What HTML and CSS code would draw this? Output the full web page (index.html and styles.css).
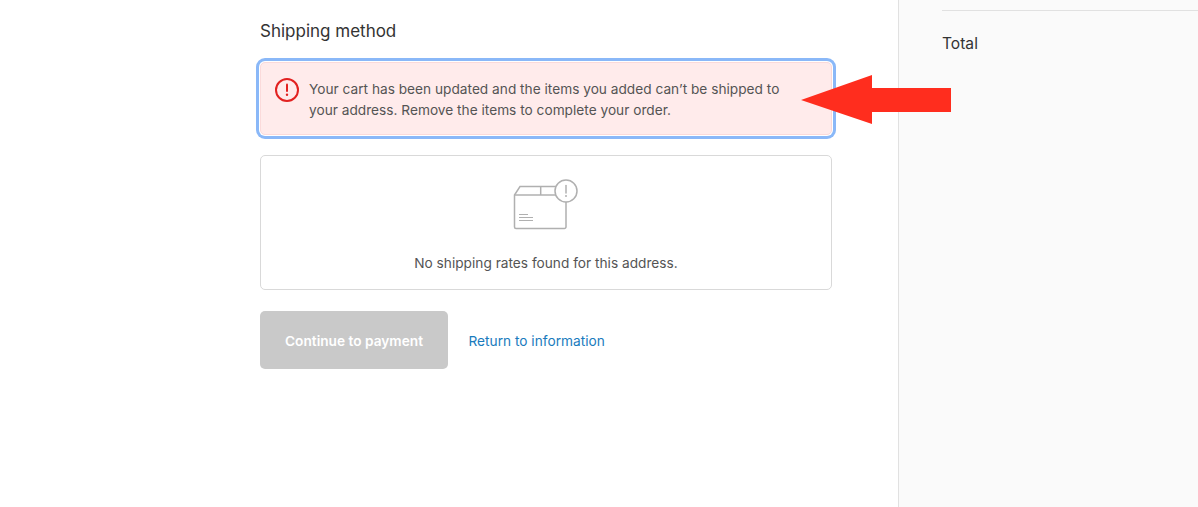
FILE: index.html
```html
<!DOCTYPE html>
<html lang="en">
<head>
<meta charset="utf-8">
<title>Shipping method</title>
<link rel="stylesheet" href="styles.css">
</head>
<body>
<div class="page">
  <main class="main">
    <h2 class="heading">Shipping method</h2>
    <div class="alert">
      <svg class="alert-icon" width="24" height="24" viewBox="0 0 24 24" fill="none">
        <circle cx="12" cy="12" r="11" stroke="#e22120" stroke-width="2"/>
        <path d="M12 6.500v6.500" stroke="#e22120" stroke-width="2" stroke-linecap="round"/>
        <circle cx="12" cy="16.800" r="1.200" fill="#e22120"/>
      </svg>
      <p class="alert-text">Your cart has been updated and the items you added can’t be shipped to your address. Remove the items to complete your order.</p>
    </div>
    <div class="rates">
      <svg class="rates-icon" width="66" height="52" viewBox="0 0 66 52" fill="none" stroke="#b0b0b0" stroke-width="1.500">
        <path d="M1.500 49V17L7 8.500H43"/>
        <path d="M1.500 17H53"/>
        <path d="M53 24V49a1.500 1.500 0 0 1-1.500 1.500H3A1.500 1.500 0 0 1 1.500 49"/>
        <path d="M27.700 8.500V17"/>
        <path d="M6 36.500H15M6 39.500H20M6 42.500H20" stroke-width="1"/>
        <circle cx="53" cy="13" r="11" fill="#fff"/>
        <path d="M53 7.500V15" stroke-linecap="round"/>
        <circle cx="53" cy="18" r="1" fill="#b0b0b0" stroke="none"/>
      </svg>
      <p class="rates-text">No shipping rates found for this address.</p>
    </div>
    <div class="actions">
      <button class="continue" type="button" disabled>Continue to payment</button>
      <a class="return" href="#">Return to information</a>
    </div>
  </main>
  <aside class="sidebar">
    <div class="summary-line">
      <span class="total">Total</span>
    </div>
  </aside>
  <svg class="arrow" width="150" height="49" viewBox="0 0 150 49">
    <polygon points="0,25 71,0 71,13 150,13 150,37 71,37 71,49" fill="#ff2d1e"/>
  </svg>
</div>
</body>
</html>
```
FILE: styles.css
```css
html, body {
  margin: 0;
  padding: 0;
  background: #fff;
}
.page {
  position: relative;
  display: flex;
  height: 507px;
  overflow: hidden;
  font-family: Inter, "Liberation Sans", sans-serif;
  color: #4f4f4f;
}
.main {
  box-sizing: border-box;
  width: 898px;
  padding: 21px 0 0 260px;
}
.main > * {
  width: 572px;
}
.heading {
  margin: 0 0 20px;
  font-size: 17px;
  line-height: 21px;
  font-weight: 400;
  color: #333;
}
.alert {
  box-sizing: border-box;
  display: flex;
  gap: 10px;
  height: 73px;
  padding: 15px 14px;
  align-items: flex-start;
  background: #ffebeb;
  border: 1px solid #fbdada;
  border-radius: 5px;
  box-shadow: 0 0 0 1px #fff, 0 0 0 4px #8ab8f8;
}
.alert-icon {
  flex: none;
}
.alert-text {
  margin: 1px 0 0;
  width: 490px;
  font-size: 13.700px;
  line-height: 21px;
  color: #545454;
}
.rates {
  box-sizing: border-box;
  display: flex;
  flex-direction: column;
  align-items: center;
  height: 135px;
  margin-top: 20px;
  padding-top: 22px;
  border: 1px solid #d9d9d9;
  border-radius: 5px;
}
.rates-icon {
  display: block;
}
.rates-text {
  margin: 23px 0 0;
  font-size: 13.700px;
  line-height: 21px;
  color: #545454;
}
.actions {
  display: flex;
  align-items: center;
  gap: 20.500px;
  margin-top: 21px;
}
.continue {
  width: 188px;
  height: 58px;
  padding: 2px 0 0;
  border: 0;
  border-radius: 5px;
  background: #c9c9c9;
  color: #fff;
  font: 600 13.700px Inter, "Liberation Sans", sans-serif;
}
.return {
  padding-top: 2px;
  font-size: 13.700px;
  color: #197bbd;
  text-decoration: none;
}
.sidebar {
  box-sizing: border-box;
  flex: 1;
  padding-left: 43px;
  background: #fafafa;
  border-left: 1px solid #e1e1e1;
}
.summary-line {
  margin-top: 10px;
  padding-top: 22px;
  border-top: 1px solid #e1e1e1;
}
.total {
  font-size: 15.600px;
  line-height: 21px;
  display: block;
  color: #333;
}
.arrow {
  position: absolute;
  left: 801px;
  top: 75px;
}
```
